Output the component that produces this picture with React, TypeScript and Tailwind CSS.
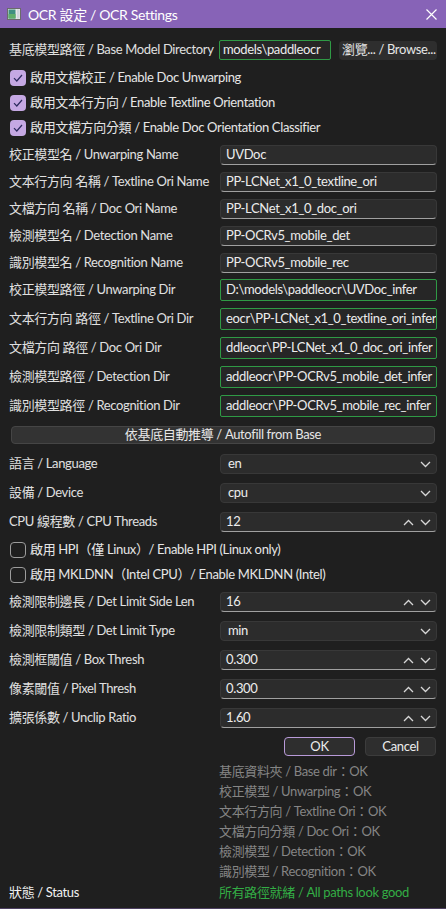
import React from "react";

const font = "font-['Lato','Noto_Sans_CJK_TC',sans-serif] tracking-[-0.35px]";

const Chevron = ({ up = false }: { up?: boolean }) => (
  <svg width="11" height="7" viewBox="0 0 11 7" className="shrink-0">
    <path
      d={up ? "M1 6 L5.5 1.5 L10 6" : "M1 1 L5.5 5.5 L10 1"}
      fill="none"
      stroke="#d6d6d6"
      strokeWidth="1.3"
    />
  </svg>
);

const Check = ({ on }: { on: boolean }) =>
  on ? (
    <span className="w-4 h-4 rounded-[4px] bg-[#c5a8e3] flex items-center justify-center shrink-0">
      <svg width="10" height="8" viewBox="0 0 10 8">
        <path d="M1 4.2 L3.8 7 L9 1" fill="none" stroke="#2c2a5e" strokeWidth="1.2" />
      </svg>
    </span>
  ) : (
    <span className="w-4 h-4 rounded-[4px] border border-[#9c9c9c] shrink-0" />
  );

const CheckRow = ({ on, label }: { on: boolean; label: string }) => (
  <div className="flex items-center gap-[4px] h-4 pl-[1px]">
    <Check on={on} />
    <span className="text-[13px] text-[#e6e6e6] whitespace-nowrap">{label}</span>
  </div>
);

const Row = ({ label, children }: { label: string; children: React.ReactNode }) => (
  <div className="flex items-center">
    <span className="w-[211px] shrink-0 text-[13px] text-[#e0e0e0] whitespace-nowrap">{label}</span>
    <div className="flex-1 min-w-0">{children}</div>
  </div>
);

const NameInput = ({ value }: { value: string }) => (
  <div className="h-5 rounded-[4px] bg-[#2c2c2c] border border-[#383838] border-b-[#a0a0a0] px-[5px] flex items-center text-[13px] text-[#ececec] whitespace-nowrap overflow-hidden">
    {value}
  </div>
);

// the dir fields are scrolled to the end, so only the tail of the path shows
const DirInput = ({ value }: { value: string }) => (
  <div className="h-[22px] rounded-[2px] bg-[#262626] border border-[#2f9a45] px-[5px] flex items-center text-[13px] text-[#ececec] whitespace-nowrap overflow-hidden">
    {value}
  </div>
);

const Combo = ({ value }: { value: string }) => (
  <div className="h-5 rounded-[4px] bg-[#2c2c2c] border border-[#383838] pl-[7px] pr-[5px] flex items-center justify-between text-[13px] text-[#ececec]">
    <span>{value}</span>
    <Chevron />
  </div>
);

const Spin = ({ value }: { value: string }) => (
  <div className="h-5 rounded-[4px] bg-[#2c2c2c] border border-[#383838] border-b-[#a0a0a0] pl-[5px] pr-[5px] flex items-center justify-between text-[13px] text-[#ececec]">
    <span>{value}</span>
    <span className="flex items-center gap-[6px]">
      <Chevron up />
      <Chevron />
    </span>
  </div>
);

export default function App() {
  const names = [
    ["校正模型名 / Unwarping Name", "UVDoc"],
    ["文本行方向 名稱 / Textline Ori Name", "PP-LCNet_x1_0_textline_ori"],
    ["文檔方向 名稱 / Doc Ori Name", "PP-LCNet_x1_0_doc_ori"],
    ["檢測模型名 / Detection Name", "PP-OCRv5_mobile_det"],
    ["識別模型名 / Recognition Name", "PP-OCRv5_mobile_rec"],
  ];
  const dirs = [
    ["校正模型路徑 / Unwarping Dir", "D:\\models\\paddleocr\\UVDoc_infer"],
    ["文本行方向 路徑 / Textline Ori Dir", "eocr\\PP-LCNet_x1_0_textline_ori_infer"],
    ["文檔方向 路徑 / Doc Ori Dir", "ddleocr\\PP-LCNet_x1_0_doc_ori_infer"],
    ["檢測模型路徑 / Detection Dir", "addleocr\\PP-OCRv5_mobile_det_infer"],
    ["識別模型路徑 / Recognition Dir", "addleocr\\PP-OCRv5_mobile_rec_infer"],
  ];
  const status = [
    "基底資料夾 / Base dir：OK",
    "校正模型 / Unwarping：OK",
    "文本行方向 / Textline Ori：OK",
    "文檔方向分類 / Doc Ori：OK",
    "檢測模型 / Detection：OK",
    "識別模型 / Recognition：OK",
  ];

  return (
    <div className={`w-[446px] h-[909px] bg-[#1f1f1f] flex flex-col overflow-hidden border-b border-[#4c3f60] ${font}`}>
      {/* title bar */}
      <div className="h-[28px] bg-[#8763b7] flex items-center pl-[7px] pr-[8px] shrink-0">
        <svg width="14" height="12" viewBox="0 0 14 12">
          <rect x="0.5" y="0.5" width="13" height="11" fill="#e8e8e8" stroke="#6b6b6b" />
          <rect x="1.5" y="1.5" width="7" height="9" fill="#3e8f80" />
          <rect x="1.5" y="6" width="7" height="4.5" fill="#5fae6a" />
          <rect x="10" y="1.5" width="2.5" height="9" fill="#cfd6dc" />
        </svg>
        <span className="ml-[7px] text-[14px] text-white">OCR 設定 / OCR Settings</span>
        <svg width="11" height="11" viewBox="0 0 11 11" className="ml-auto mr-[1px]">
          <path d="M0.5 0.5 L10.5 10.5 M10.5 0.5 L0.5 10.5" stroke="#ffffff" strokeWidth="1.2" />
        </svg>
      </div>

      <div className="flex flex-col px-[9px] pt-[12px]">
        {/* base dir */}
        <div className="flex items-center h-5">
          <span className="w-[210px] shrink-0 text-[13px] text-[#e0e0e0] whitespace-nowrap">
            基底模型路徑 / Base Model Directory
          </span>
          <div className="w-[112px] h-5 border border-[#2f9a45] rounded-[2px] bg-[#262626] flex items-center pl-[3px] overflow-hidden whitespace-nowrap text-[13px] text-[#ececec]">
            models\paddleocr
          </div>
          <div className="ml-[8px] flex-1 h-[19px] rounded-[4px] bg-[#2e2e2e] flex items-center pl-[3px] overflow-hidden whitespace-nowrap text-[13px] text-[#e6e6e6]">
            瀏覽... / Browse...
          </div>
        </div>

        <div className="flex flex-col mt-[10px] gap-[9px]">
          <CheckRow on label="啟用文檔校正 / Enable Doc Unwarping" />
          <CheckRow on label="啟用文本行方向 / Enable Textline Orientation" />
          <CheckRow on label="啟用文檔方向分類 / Enable Doc Orientation Classifier" />
        </div>

        <div className="flex flex-col mt-[9px] gap-[7px]">
          {names.map(([l, v]) => (
            <Row key={l} label={l}>
              <NameInput value={v} />
            </Row>
          ))}
        </div>

        <div className="flex flex-col mt-[6px] gap-[7px]">
          {dirs.map(([l, v]) => (
            <Row key={l} label={l}>
              <DirInput value={v} />
            </Row>
          ))}
        </div>

        <div className="mt-[9px] mx-[2px] h-[18px] rounded-[4px] bg-[#333333] border border-[#454545] flex items-center justify-center text-[13px] text-[#e6e6e6]">
          依基底自動推導 / Autofill from Base
        </div>

        <div className="flex flex-col mt-[10px] gap-[9px]">
          <Row label="語言 / Language">
            <Combo value="en" />
          </Row>
          <Row label="設備 / Device">
            <Combo value="cpu" />
          </Row>
          <Row label="CPU 線程數 / CPU Threads">
            <Spin value="12" />
          </Row>
        </div>

        <div className="flex flex-col mt-[10px] gap-[9px]">
          <CheckRow on={false} label="啟用 HPI（僅 Linux）/ Enable HPI (Linux only)" />
          <CheckRow on={false} label="啟用 MKLDNN（Intel CPU）/ Enable MKLDNN (Intel)" />
        </div>

        <div className="flex flex-col mt-[9px] gap-[9px]">
          <Row label="檢測限制邊長 / Det Limit Side Len">
            <Spin value="16" />
          </Row>
          <Row label="檢測限制類型 / Det Limit Type">
            <Combo value="min" />
          </Row>
          <Row label="檢測框閾值 / Box Thresh">
            <Spin value="0.300" />
          </Row>
          <Row label="像素閾值 / Pixel Thresh">
            <Spin value="0.300" />
          </Row>
          <Row label="擴張係數 / Unclip Ratio">
            <Spin value="1.60" />
          </Row>
        </div>

        <div className="flex justify-end gap-[10px] mt-[9px] pr-[1px]">
          <button className="w-[71px] h-[19px] rounded-[4px] bg-[#2e2e2e] border border-[#b89ad8] text-[13px] text-[#ececec] leading-none">
            OK
          </button>
          <button className="w-[71px] h-[19px] rounded-[4px] bg-[#2e2e2e] border border-[#3c3c3c] text-[13px] text-[#ececec] leading-none">
            Cancel
          </button>
        </div>

        <div className="flex flex-col mt-[6px] pl-[210px]">
          {status.map((s) => (
            <div key={s} className="h-5 flex items-center text-[13px] text-[#858585] whitespace-nowrap">
              {s}
            </div>
          ))}
        </div>

        <div className="flex items-center h-5 mt-[1px]">
          <span className="w-[210px] shrink-0 text-[13px] text-[#f2f2f2]">狀態 / Status</span>
          <span className="text-[13px] text-[#33ad45] whitespace-nowrap">所有路徑就緒 / All paths look good</span>
        </div>
      </div>
    </div>
  );
}
